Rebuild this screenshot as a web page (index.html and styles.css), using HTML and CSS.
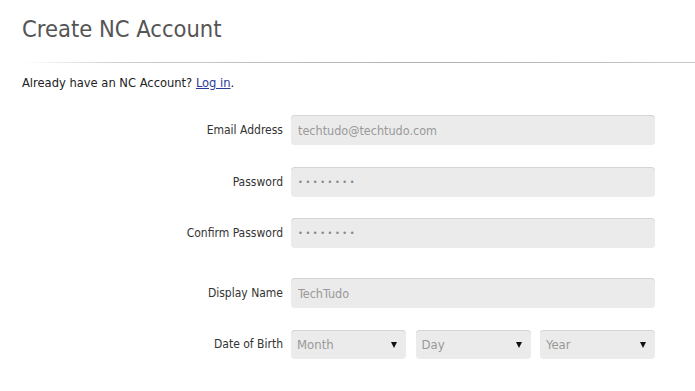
FILE: index.html
```html
<!DOCTYPE html>
<html lang="en">
<head>
  <meta charset="UTF-8">
  <title>Create NC Account</title>
  <meta name="viewport" content="width=device-width, initial-scale=1">
  <link rel="stylesheet" href="styles.css">
</head>
<body>
  <div class="page">
    <h1 class="title">Create NC Account</h1>
    <div class="divider"></div>
    <p class="login-note">Already have an NC Account? <a href="#">Log in</a>.</p>

    <form class="signup">
      <div class="row">
        <label>Email Address</label>
        <input type="text" value="techtudo@techtudo.com">
      </div>
      <div class="row">
        <label>Password</label>
        <input type="text" class="dots" value="••••••••">
      </div>
      <div class="row">
        <label>Confirm Password</label>
        <input type="text" class="dots" value="••••••••">
      </div>
      <div class="row row-gap">
        <label>Display Name</label>
        <input type="text" value="TechTudo">
      </div>
      <div class="row">
        <label>Date of Birth</label>
        <div class="selects">
          <div class="select"><select><option>Month</option></select></div>
          <div class="select"><select><option>Day</option></select></div>
          <div class="select"><select><option>Year</option></select></div>
        </div>
      </div>
    </form>
  </div>
</body>
</html>
```

FILE: styles.css
```css
body {
  margin: 0;
  background: #fff;
  font-family: "DejaVu Sans Condensed", "DejaVu Sans", sans-serif;
  color: #333;
}
.page {
  padding: 12px 0 0 22px;
}
.title {
  margin: 0;
  font-size: 23.5px;
  font-weight: normal;
  color: #555;
  line-height: 34px;
}
.divider {
  height: 1px;
  margin-top: 16px;
  background: linear-gradient(to right, #fff, #ccc 15%, #b0b0b0 60%, #c8c8c8);
}
.login-note {
  margin: 12px 0 0;
  font-size: 12.8px;
  line-height: 15px;
  color: #222;
}
.login-note a {
  color: #2a3a9a;
}
.signup {
  margin-top: 25px;
  display: flex;
  flex-direction: column;
  gap: 21.5px;
}
.row {
  display: grid;
  grid-template-columns: 261px 364px;
  column-gap: 8px;
  align-items: center;
}
.row-gap {
  margin-top: 8.5px;
}
.row label {
  text-align: right;
  font-size: 12px;
  color: #333;
}
input, select {
  font-family: inherit;
  font-size: 12.5px;
  color: #999;
  background: #ebebeb;
  border: none;
  border-radius: 4px;
  box-shadow: inset 0 1px 0 #d4d4d4;
  box-sizing: border-box;
  outline: none;
}
input {
  height: 30px;
  padding: 0 7px;
  width: 100%;
}
.dots {
  font-size: 9px;
  letter-spacing: 2.6px;
  color: #888;
}
.selects {
  display: grid;
  grid-template-columns: 115px 115px 115px;
  column-gap: 9.5px;
}
.select {
  position: relative;
}
.select select {
  appearance: none;
  width: 100%;
  height: 29px;
  padding: 0 6px;
  font-size: 13px;
}
.select::after {
  content: "";
  position: absolute;
  right: 9px;
  top: 12px;
  border-left: 3px solid transparent;
  border-right: 3px solid transparent;
  border-top: 6px solid #111;
  pointer-events: none;
}
```
